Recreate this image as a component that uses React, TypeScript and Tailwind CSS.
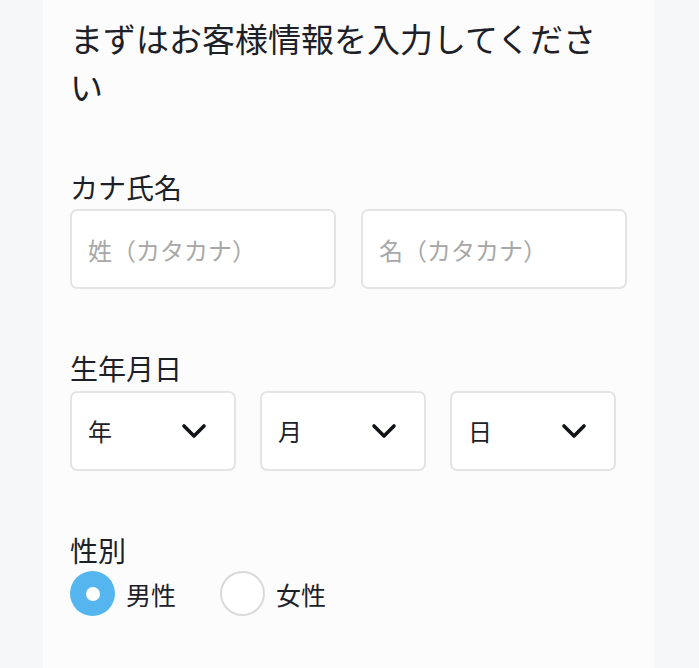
const font = { fontFamily: '"Noto Sans CJK JP", "Noto Sans", sans-serif' }

function Chevron() {
  return (
    <svg
      className="pointer-events-none absolute right-[29px] top-1/2 -translate-y-1/2 w-[26px] h-[16px] text-[#111418]"
      viewBox="0 0 26 16"
      fill="none"
      stroke="currentColor"
      strokeWidth={3.6}
      strokeLinecap="round"
      strokeLinejoin="round"
    >
      <polyline points="3,3 13,13 23,3" />
    </svg>
  )
}

function SelectBox({ label }: { label: string }) {
  return (
    <div className="relative w-[166px] h-[80px]">
      <select
        defaultValue=""
        className="w-full h-full appearance-none bg-white border-2 border-[#e4e4e4] rounded-[7px] pl-[16px] text-[24px] text-[#1d2127] outline-none"
      >
        <option value="">{label}</option>
      </select>
      <Chevron />
    </div>
  )
}

function Radio({ label, checked }: { label: string; checked?: boolean }) {
  return (
    <label className="flex items-center gap-[11px]">
      {checked ? (
        <span className="w-[45px] h-[45px] rounded-full bg-[#55b6ef] flex items-center justify-center">
          <span className="w-[14px] h-[14px] rounded-full bg-white" />
        </span>
      ) : (
        <span className="w-[45px] h-[45px] rounded-full bg-white border-2 border-[#dadada]" />
      )}
      <span className="text-[25px] leading-[36px] text-[#1d2127]">{label}</span>
    </label>
  )
}

export default function App() {
  return (
    <div className="min-h-screen bg-[#f6f7f9] flex" style={font}>
      <div className="ml-[43px] w-[611px] min-h-screen bg-[#fcfcfc] px-[27px] pt-[14px] pb-10">
        <h1 className="text-[33px] leading-[48px] text-[#1d2127] font-normal">
          まずはお客様情報を入力してください
        </h1>

        <section className="mt-[59px]">
          <div className="text-[28px] leading-[36px] text-[#1d2127] mb-[4px]">カナ氏名</div>
          <div className="grid grid-cols-2 gap-[25px]">
            <input
              placeholder="姓（カタカナ）"
              className="h-[80px] bg-white border-2 border-[#e4e4e4] rounded-[7px] px-[16px] text-[24px] text-[#1d2127] placeholder:text-[#a8a8a8] outline-none"
            />
            <input
              placeholder="名（カタカナ）"
              className="h-[80px] bg-white border-2 border-[#e4e4e4] rounded-[7px] px-[16px] text-[24px] text-[#1d2127] placeholder:text-[#a8a8a8] outline-none"
            />
          </div>
        </section>

        <section className="mt-[61px]">
          <div className="text-[28px] leading-[36px] text-[#1d2127] mb-[5px]">生年月日</div>
          <div className="flex gap-[24px]">
            <SelectBox label="年" />
            <SelectBox label="月" />
            <SelectBox label="日" />
          </div>
        </section>

        <section className="mt-[61px]">
          <div className="text-[28px] leading-[36px] text-[#1d2127] mb-[3px]">性別</div>
          <div className="flex items-center gap-[44px]">
            <Radio label="男性" checked />
            <Radio label="女性" />
          </div>
        </section>
      </div>
    </div>
  )
}
